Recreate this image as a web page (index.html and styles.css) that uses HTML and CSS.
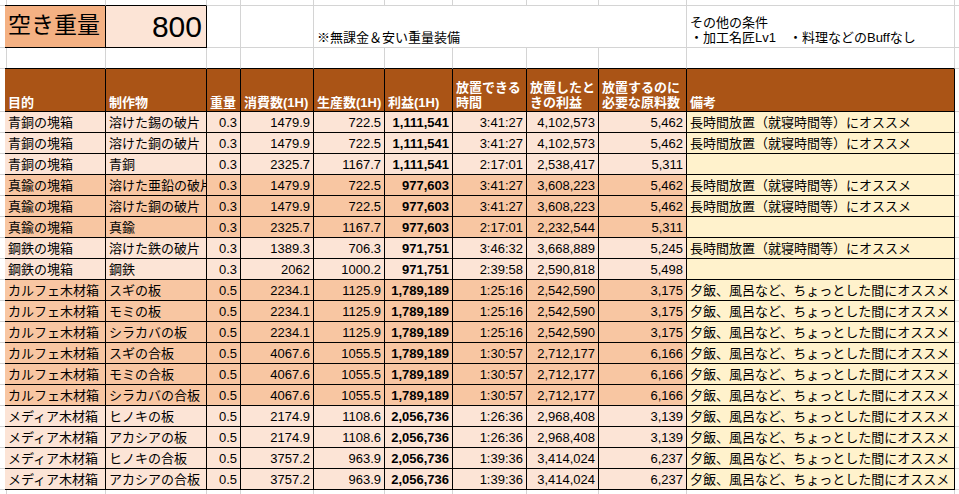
FILE: index.html
```html
<!DOCTYPE html>
<html lang="ja">
<head>
<meta charset="utf-8">
<title>空き重量</title>
<link rel="stylesheet" href="styles.css">
</head>
<body>
<div class="sheet">
  <div class="row r0">
    <div class="c"></div><div class="c kb"></div><div class="c kb"></div><div class="c"></div><div class="c"></div><div class="c"></div><div class="c"></div><div class="c"></div><div class="c"></div><div class="c"></div><div class="c"></div><div class="c last"></div>
  </div>
  <div class="row r1">
    <div class="c ke"></div>
    <div class="c k label">空き重量</div>
    <div class="c k big">800</div>
    <div class="c"></div>
    <div class="c"></div>
    <div class="c span5 bot">※無課金＆安い重量装備</div>
    <div class="c bot">その他の条件<br>・加工名匠Lv1　・料理などのBuffなし</div>
    <div class="c last"></div>
  </div>
  <div class="row r2">
    <div class="c ke0"></div><div class="c kb"></div><div class="c kb"></div><div class="c kb"></div><div class="c kb"></div><div class="c kb"></div><div class="c kb"></div><div class="c kb"></div><div class="c kb"></div><div class="c kb"></div><div class="c kb"></div><div class="c last"></div>
  </div>
  <div class="row hdr">
    <div class="c ke"></div>
    <div class="c k h"><span>目的</span></div>
    <div class="c k h"><span>制作物</span></div>
    <div class="c k h"><span>重量</span></div>
    <div class="c k h"><span>消費数(1H)</span></div>
    <div class="c k h"><span>生産数(1H)</span></div>
    <div class="c k h"><span>利益(1H)</span></div>
    <div class="c k h"><span>放置できる<br>時間</span></div>
    <div class="c k h"><span>放置したと<br>きの利益</span></div>
    <div class="c k h"><span>放置するのに<br>必要な原料数</span></div>
    <div class="c k h"><span>備考</span></div>
    <div class="c last"></div>
  </div>

  <div class="row d lt"><div class="c ke"></div><div class="c k">青銅の塊箱</div><div class="c k">溶けた錫の破片</div><div class="c k n">0.3</div><div class="c k n">1479.9</div><div class="c k n">722.5</div><div class="c k n b">1,111,541</div><div class="c k n">3:41:27</div><div class="c k n">4,102,573</div><div class="c k n">5,462</div><div class="c k note">長時間放置（就寝時間等）にオススメ</div><div class="c last"></div></div>
  <div class="row d lt"><div class="c ke"></div><div class="c k">青銅の塊箱</div><div class="c k">溶けた銅の破片</div><div class="c k n">0.3</div><div class="c k n">1479.9</div><div class="c k n">722.5</div><div class="c k n b">1,111,541</div><div class="c k n">3:41:27</div><div class="c k n">4,102,573</div><div class="c k n">5,462</div><div class="c k note">長時間放置（就寝時間等）にオススメ</div><div class="c last"></div></div>
  <div class="row d lt"><div class="c ke"></div><div class="c k">青銅の塊箱</div><div class="c k">青銅</div><div class="c k n">0.3</div><div class="c k n">2325.7</div><div class="c k n">1167.7</div><div class="c k n b">1,111,541</div><div class="c k n">2:17:01</div><div class="c k n">2,538,417</div><div class="c k n">5,311</div><div class="c k note"></div><div class="c last"></div></div>
  <div class="row d md"><div class="c ke"></div><div class="c k">真鍮の塊箱</div><div class="c k">溶けた亜鉛の破片</div><div class="c k n">0.3</div><div class="c k n">1479.9</div><div class="c k n">722.5</div><div class="c k n b">977,603</div><div class="c k n">3:41:27</div><div class="c k n">3,608,223</div><div class="c k n">5,462</div><div class="c k note">長時間放置（就寝時間等）にオススメ</div><div class="c last"></div></div>
  <div class="row d md"><div class="c ke"></div><div class="c k">真鍮の塊箱</div><div class="c k">溶けた銅の破片</div><div class="c k n">0.3</div><div class="c k n">1479.9</div><div class="c k n">722.5</div><div class="c k n b">977,603</div><div class="c k n">3:41:27</div><div class="c k n">3,608,223</div><div class="c k n">5,462</div><div class="c k note">長時間放置（就寝時間等）にオススメ</div><div class="c last"></div></div>
  <div class="row d md"><div class="c ke"></div><div class="c k">真鍮の塊箱</div><div class="c k">真鍮</div><div class="c k n">0.3</div><div class="c k n">2325.7</div><div class="c k n">1167.7</div><div class="c k n b">977,603</div><div class="c k n">2:17:01</div><div class="c k n">2,232,544</div><div class="c k n">5,311</div><div class="c k note"></div><div class="c last"></div></div>
  <div class="row d lt"><div class="c ke"></div><div class="c k">鋼鉄の塊箱</div><div class="c k">溶けた鉄の破片</div><div class="c k n">0.3</div><div class="c k n">1389.3</div><div class="c k n">706.3</div><div class="c k n b">971,751</div><div class="c k n">3:46:32</div><div class="c k n">3,668,889</div><div class="c k n">5,245</div><div class="c k note">長時間放置（就寝時間等）にオススメ</div><div class="c last"></div></div>
  <div class="row d lt"><div class="c ke"></div><div class="c k">鋼鉄の塊箱</div><div class="c k">鋼鉄</div><div class="c k n">0.3</div><div class="c k n">2062</div><div class="c k n">1000.2</div><div class="c k n b">971,751</div><div class="c k n">2:39:58</div><div class="c k n">2,590,818</div><div class="c k n">5,498</div><div class="c k note"></div><div class="c last"></div></div>
  <div class="row d md"><div class="c ke"></div><div class="c k">カルフェ木材箱</div><div class="c k">スギの板</div><div class="c k n">0.5</div><div class="c k n">2234.1</div><div class="c k n">1125.9</div><div class="c k n b">1,789,189</div><div class="c k n">1:25:16</div><div class="c k n">2,542,590</div><div class="c k n">3,175</div><div class="c k note">夕飯、風呂など、ちょっとした間にオススメ</div><div class="c last"></div></div>
  <div class="row d md"><div class="c ke"></div><div class="c k">カルフェ木材箱</div><div class="c k">モミの板</div><div class="c k n">0.5</div><div class="c k n">2234.1</div><div class="c k n">1125.9</div><div class="c k n b">1,789,189</div><div class="c k n">1:25:16</div><div class="c k n">2,542,590</div><div class="c k n">3,175</div><div class="c k note">夕飯、風呂など、ちょっとした間にオススメ</div><div class="c last"></div></div>
  <div class="row d md"><div class="c ke"></div><div class="c k">カルフェ木材箱</div><div class="c k">シラカバの板</div><div class="c k n">0.5</div><div class="c k n">2234.1</div><div class="c k n">1125.9</div><div class="c k n b">1,789,189</div><div class="c k n">1:25:16</div><div class="c k n">2,542,590</div><div class="c k n">3,175</div><div class="c k note">夕飯、風呂など、ちょっとした間にオススメ</div><div class="c last"></div></div>
  <div class="row d md"><div class="c ke"></div><div class="c k">カルフェ木材箱</div><div class="c k">スギの合板</div><div class="c k n">0.5</div><div class="c k n">4067.6</div><div class="c k n">1055.5</div><div class="c k n b">1,789,189</div><div class="c k n">1:30:57</div><div class="c k n">2,712,177</div><div class="c k n">6,166</div><div class="c k note">夕飯、風呂など、ちょっとした間にオススメ</div><div class="c last"></div></div>
  <div class="row d md"><div class="c ke"></div><div class="c k">カルフェ木材箱</div><div class="c k">モミの合板</div><div class="c k n">0.5</div><div class="c k n">4067.6</div><div class="c k n">1055.5</div><div class="c k n b">1,789,189</div><div class="c k n">1:30:57</div><div class="c k n">2,712,177</div><div class="c k n">6,166</div><div class="c k note">夕飯、風呂など、ちょっとした間にオススメ</div><div class="c last"></div></div>
  <div class="row d md"><div class="c ke"></div><div class="c k">カルフェ木材箱</div><div class="c k">シラカバの合板</div><div class="c k n">0.5</div><div class="c k n">4067.6</div><div class="c k n">1055.5</div><div class="c k n b">1,789,189</div><div class="c k n">1:30:57</div><div class="c k n">2,712,177</div><div class="c k n">6,166</div><div class="c k note">夕飯、風呂など、ちょっとした間にオススメ</div><div class="c last"></div></div>
  <div class="row d lt"><div class="c ke"></div><div class="c k">メディア木材箱</div><div class="c k">ヒノキの板</div><div class="c k n">0.5</div><div class="c k n">2174.9</div><div class="c k n">1108.6</div><div class="c k n b">2,056,736</div><div class="c k n">1:26:36</div><div class="c k n">2,968,408</div><div class="c k n">3,139</div><div class="c k note">夕飯、風呂など、ちょっとした間にオススメ</div><div class="c last"></div></div>
  <div class="row d lt"><div class="c ke"></div><div class="c k">メディア木材箱</div><div class="c k">アカシアの板</div><div class="c k n">0.5</div><div class="c k n">2174.9</div><div class="c k n">1108.6</div><div class="c k n b">2,056,736</div><div class="c k n">1:26:36</div><div class="c k n">2,968,408</div><div class="c k n">3,139</div><div class="c k note">夕飯、風呂など、ちょっとした間にオススメ</div><div class="c last"></div></div>
  <div class="row d lt"><div class="c ke"></div><div class="c k">メディア木材箱</div><div class="c k">ヒノキの合板</div><div class="c k n">0.5</div><div class="c k n">3757.2</div><div class="c k n">963.9</div><div class="c k n b">2,056,736</div><div class="c k n">1:39:36</div><div class="c k n">3,414,024</div><div class="c k n">6,237</div><div class="c k note">夕飯、風呂など、ちょっとした間にオススメ</div><div class="c last"></div></div>
  <div class="row d lt"><div class="c ke"></div><div class="c k">メディア木材箱</div><div class="c k">アカシアの合板</div><div class="c k n">0.5</div><div class="c k n">3757.2</div><div class="c k n">963.9</div><div class="c k n b">2,056,736</div><div class="c k n">1:39:36</div><div class="c k n">3,414,024</div><div class="c k n">6,237</div><div class="c k note">夕飯、風呂など、ちょっとした間にオススメ</div><div class="c last"></div></div>

  <div class="row tail">
    <div class="c"></div><div class="c"></div><div class="c"></div><div class="c"></div><div class="c"></div><div class="c"></div><div class="c"></div><div class="c"></div><div class="c"></div><div class="c"></div><div class="c"></div><div class="c last"></div>
  </div>
</div>
</body>
</html>
```

FILE: styles.css
```css
html, body {
  margin: 0;
  padding: 0;
  background: #fff;
}

.sheet {
  width: 959px;
  height: 494px;
  overflow: hidden;
  font-family: "Liberation Sans", "Noto Sans CJK JP", sans-serif;
  font-size: 13px;
  color: #000;
}

.row {
  display: grid;
  grid-template-columns: 5px 101px 101px 34px 73px 71px 68px 74px 72px 88px 268px 1fr;
}

.r0 { height: 6px; }
.r1 { height: 42px; }
.r2 { height: 21px; }
.hdr { height: 43px; }
.d { height: 21px; }
.tail { height: 20px; }

.c {
  box-sizing: border-box;
  border: 0 solid #d4d4d4;
  border-right-width: 1px;
  border-bottom-width: 1px;
  overflow: hidden;
  white-space: nowrap;
  padding: 0 3px;
  min-width: 0;
}

.c.last { border-right-width: 0; }

/* black table borders */
.k { border-color: #000; }
.kb { border-bottom-color: #000; }
.ke { border-right-color: #000; }

/* top block */
.label {
  background: #f4b183;
  font-family: "Noto Sans CJK JP", sans-serif;
  font-size: 23px;
  line-height: 35px;
  padding: 0 3px 6px 3px;
}

.big {
  background: #fce4d6;
  font-size: 30px;
  line-height: 41px;
  text-align: right;
  padding: 0 4px 0 3px;
}

.span5 { grid-column: span 5; }

.bot {
  display: flex;
  flex-direction: column;
  justify-content: flex-end;
  line-height: 15px;
  padding-bottom: 2px;
}

/* header */
.h {
  background: #aa5416;
  color: #fff;
  font-weight: bold;
  display: flex;
  flex-direction: column;
  justify-content: flex-end;
  line-height: 15px;
  padding-bottom: 1px;
}

/* data rows */
.d .c { line-height: 21px; }
.lt .k { background: #fce4d6; }
.md .k { background: #f8c6a2; }
.d .k.note { background: #fff2cc; }
.n { text-align: right; }
.b { font-weight: bold; }
```
